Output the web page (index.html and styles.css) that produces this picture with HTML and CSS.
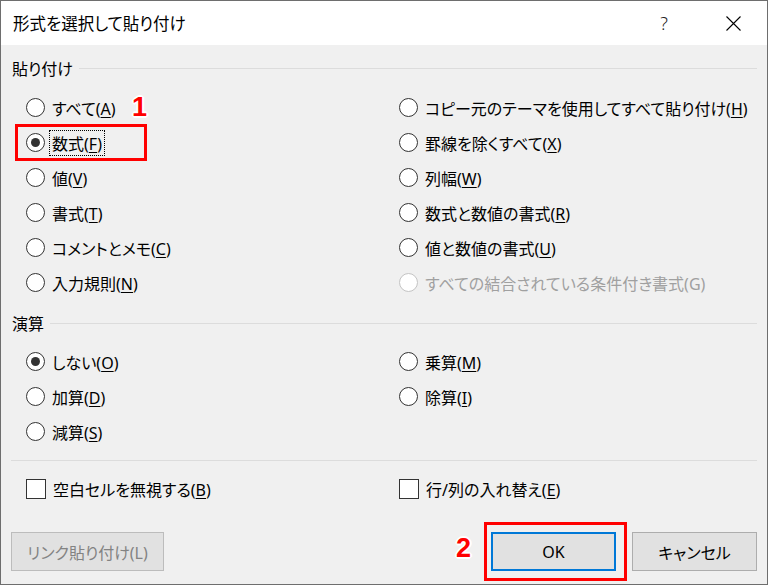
FILE: index.html
```html
<!DOCTYPE html>
<html lang="ja">
<head>
  <meta charset="UTF-8" />
  <title>形式を選択して貼り付け</title>
  <link rel="stylesheet" href="styles.css">
</head>
<body>

<div class="dialog">
  <div class="titlebar">
    <span class="title">形式を選択して貼り付け</span>
    <span class="help">?</span>
    <span class="close">
      <svg width="15" height="15" viewBox="0 0 15 15"><path d="M0.5 0.5 L14.5 14.5 M14.5 0.5 L0.5 14.5" stroke="#000" stroke-width="1.1" fill="none"/></svg>
    </span>
  </div>

  <div class="content">
    <!-- 貼り付け -->
    <div class="group-head"><span>貼り付け</span></div>
    <div class="options paste">
      <label class="opt"><span class="radio"></span><span class="text">すべて(<u>A</u>)</span></label>
      <label class="opt"><span class="radio"></span><span class="text">コピー元のテーマを使用してすべて貼り付け(<u>H</u>)</span></label>
      <label class="opt"><span class="radio checked"></span><span class="text focus">数式(<u>F</u>)</span></label>
      <label class="opt"><span class="radio"></span><span class="text">罫線を除くすべて(<u>X</u>)</span></label>
      <label class="opt"><span class="radio"></span><span class="text">値(<u>V</u>)</span></label>
      <label class="opt"><span class="radio"></span><span class="text">列幅(<u>W</u>)</span></label>
      <label class="opt"><span class="radio"></span><span class="text">書式(<u>T</u>)</span></label>
      <label class="opt"><span class="radio"></span><span class="text">数式と数値の書式(<u>R</u>)</span></label>
      <label class="opt"><span class="radio"></span><span class="text">コメントとメモ(<u>C</u>)</span></label>
      <label class="opt"><span class="radio"></span><span class="text">値と数値の書式(<u>U</u>)</span></label>
      <label class="opt"><span class="radio"></span><span class="text">入力規則(<u>N</u>)</span></label>
      <label class="opt disabled"><span class="radio"></span><span class="text">すべての結合されている条件付き書式(G)</span></label>
    </div>

    <!-- 演算 -->
    <div class="group-head calc-head"><span>演算</span></div>
    <div class="options calc">
      <label class="opt"><span class="radio checked"></span><span class="text">しない(<u>O</u>)</span></label>
      <label class="opt"><span class="radio"></span><span class="text">乗算(<u>M</u>)</span></label>
      <label class="opt"><span class="radio"></span><span class="text">加算(<u>D</u>)</span></label>
      <label class="opt"><span class="radio"></span><span class="text">除算(<u>I</u>)</span></label>
      <label class="opt"><span class="radio"></span><span class="text">減算(<u>S</u>)</span></label>
    </div>

    <div class="separator"></div>

    <div class="options checks">
      <label class="opt"><span class="checkbox"></span><span class="text">空白セルを無視する(<u>B</u>)</span></label>
      <label class="opt"><span class="checkbox"></span><span class="text">行/列の入れ替え(<u>E</u>)</span></label>
    </div>

    <div class="buttons">
      <button type="button" class="btn link" disabled>リンク貼り付け(L)</button>
      <button type="button" class="btn ok">OK</button>
      <button type="button" class="btn cancel">キャンセル</button>
    </div>
  </div>

  <!-- annotations -->
  <div class="mark box-1"></div>
  <div class="num num-1">1</div>
  <div class="mark box-2"></div>
  <div class="num num-2">2</div>
</div>

</body>
</html>
```

FILE: styles.css
```css
body {
  margin: 0;
  font-family: "Noto Sans", "Noto Sans CJK JP", sans-serif;
  font-size: 16px;
  color: #000;
  background: #f0f0f0;
}
.dialog {
  position: relative;
  width: 768px;
  height: 585px;
  box-sizing: border-box;
  border: 1px solid #6e6e6e;
  background: #f0f0f0;
  font-feature-settings: "palt";
}
.titlebar {
  height: 44px;
  background: #fff;
  display: flex;
  align-items: center;
  padding: 0 26px 0 12px;
}
.title {
  flex: 1;
  font-size: 16.5px;
}
.help {
  font-family: "Noto Sans", sans-serif;
  font-weight: 300;
  font-size: 18px;
  margin-right: 58px;
  color: #222;
}
.close {
  display: flex;
}
.content {
  padding: 13px 10px 0 10px;
}
.group-head {
  display: flex;
  align-items: center;
  height: 20px;
  padding-left: 1px;
}
.group-head::after {
  content: "";
  flex: 1;
  height: 1px;
  background: #dcdcdc;
  margin-left: 6px;
}
.options {
  display: grid;
  grid-template-columns: 373px 1fr;
  grid-auto-rows: 35px;
  padding-left: 15px;
}
.paste {
  margin-top: 12px;
}
.calc-head {
  margin-top: 13px;
}
.calc {
  margin-top: 11px;
}
.opt {
  display: flex;
  align-items: center;
  white-space: nowrap;
}
.radio {
  width: 19px;
  height: 19px;
  box-sizing: border-box;
  border: 1px solid #333;
  border-radius: 50%;
  background: #fff;
  display: flex;
  align-items: center;
  justify-content: center;
  margin-right: 7px;
}
.radio.checked::after {
  content: "";
  width: 9px;
  height: 9px;
  border-radius: 50%;
  background: #333;
}
.checkbox {
  width: 20px;
  height: 20px;
  box-sizing: border-box;
  border: 1px solid #333;
  background: #fff;
  margin-right: 7px;
}
.text u {
  text-underline-offset: 2px;
}
.text.focus {
  outline: 1px dotted #000;
  padding: 0 2px;
  margin-left: -2px;
}
.disabled .text {
  color: #a0a0a0;
}
.disabled .radio {
  border-color: #c4c4c4;
}
.separator {
  height: 1px;
  background: #dcdcdc;
  margin-top: 11px;
}
.checks {
  margin-top: 10px;
}
.buttons {
  display: flex;
  margin-top: 26px;
  gap: 16px;
}
.btn {
  height: 39px;
  font-family: inherit;
  font-size: 16px;
  font-feature-settings: "palt";
  background: #e1e1e1;
  border: 1px solid #adadad;
  color: #000;
  padding: 0;
}
.btn.link {
  width: 153px;
  color: #838383;
  border-color: #bcbcbc;
  margin-right: auto;
}
.btn.ok {
  width: 125px;
  border: 2px solid #0078d7;
}
.btn.cancel {
  width: 125px;
}
.mark {
  position: absolute;
  border: 3px solid #ff0000;
  box-sizing: border-box;
}
.box-1 {
  left: 14px;
  top: 123px;
  width: 132px;
  height: 37px;
}
.box-2 {
  left: 483px;
  top: 521px;
  width: 143px;
  height: 59px;
}
.num {
  position: absolute;
  font-family: "Liberation Sans", sans-serif;
  font-weight: bold;
  font-size: 27px;
  color: #ff0000;
  line-height: 1;
  text-shadow: -2px 0 #fff, 2px 0 #fff, 0 -2px #fff, 0 2px #fff, -1px -1px #fff, 1px 1px #fff, -1px 1px #fff, 1px -1px #fff;
}
.num-1 {
  left: 131px;
  top: 93px;
}
.num-2 {
  left: 455px;
  top: 534px;
}
```
